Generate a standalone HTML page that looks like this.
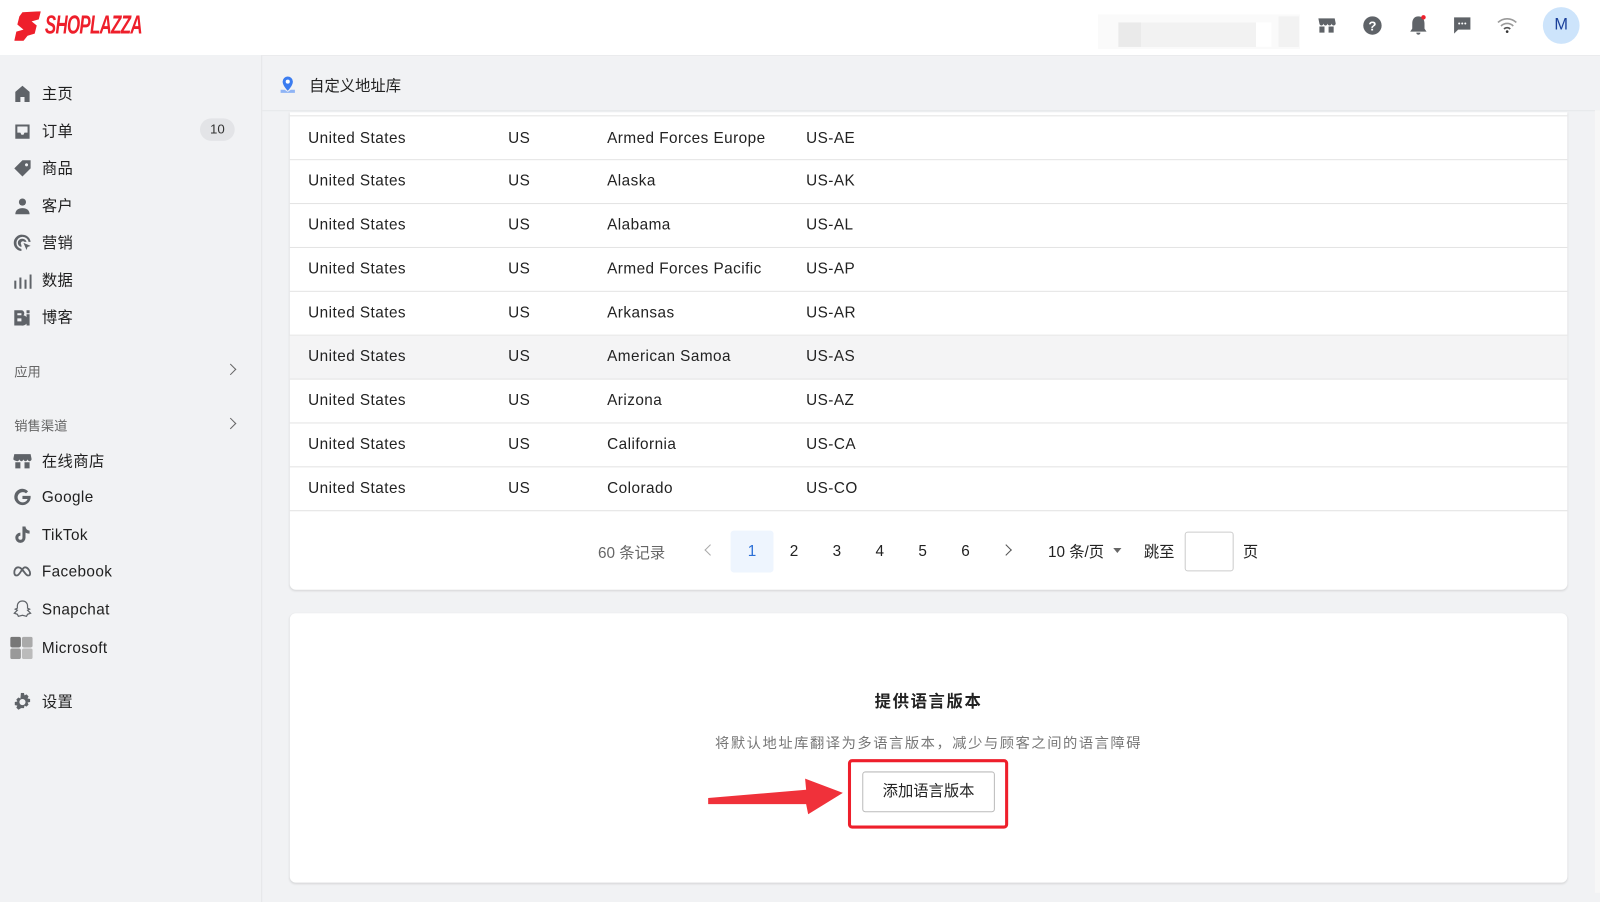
<!DOCTYPE html>
<html><head><meta charset="utf-8"><style>
*{box-sizing:border-box;margin:0;padding:0}
body{width:1600px;height:893px;overflow:hidden;background:#f1f2f4;font-family:"Liberation Sans","Noto Sans CJK SC",sans-serif;color:#222;position:relative}
#w{position:absolute;left:0;top:0;width:1568px;height:875px;transform:scale(1.020408);transform-origin:0 0}
.hdr{position:absolute;left:0;top:0;width:1568px;height:55px;background:#fff;border-bottom:1px solid #e8e9eb}
.side{position:absolute;left:0;top:54px;width:257px;height:830px;border-right:1px solid #e4e5e8;background:#f1f2f4}
.nav{position:absolute;left:13px;display:flex;align-items:center;font-size:15px;color:#1f1f1f;letter-spacing:.4px}
.nav svg{width:18px;height:18px;margin-right:10px;fill:#5f6368}
.sec{position:absolute;left:14px;font-size:13px;color:#666}
.chev{position:absolute;left:222px;width:8px;height:8px;border-right:1.5px solid #666;border-top:1.5px solid #666;transform:rotate(45deg)}
.card{position:absolute;left:284px;width:1252px;background:#fff;border-radius:6px;box-shadow:0 1px 2px rgba(0,0,0,.12)}
.row{position:absolute;left:0;width:1252px;height:43px;border-bottom:1px solid #e3e3e3;font-size:15px;color:#222;letter-spacing:.45px}
.row span{position:absolute;top:12px}
.pg{position:absolute;top:532px;font-size:15px;color:#222}
</style></head><body>
<div id="w">
<div class="hdr">
 <svg style="position:absolute;left:14px;top:11px" width="26" height="29" viewBox="0 0 26 29"><path d="M8 1 L26 0 L24 8 L17 10 L22 14 L20 22 L13 24 L9 29 L0 29 L2 20 L9 18 L3 13 L5 5 Z" fill="#ee1f2b"/></svg>
 <div style="position:absolute;left:44px;top:11px;font:italic bold 24px 'Liberation Sans',sans-serif;color:#ee1f2b;letter-spacing:-1px;transform:scale(0.69,1.05);transform-origin:0 0">SHOPLAZZA</div>
 <div style="position:absolute;left:1076px;top:14px;width:198px;height:34px;background:#fafafa"></div>
 <div style="position:absolute;left:1096px;top:22px;width:150px;height:24px;background:linear-gradient(90deg,#eaeaea 0 22px,#f2f2f2 22px 135px,#fff 135px)"></div>
 <div style="position:absolute;left:1253px;top:16px;width:20px;height:30px;background:#f2f2f2"></div>
 <svg style="position:absolute;left:1290px;top:15px" width="20" height="20" viewBox="0 0 20 20" fill="#5f6368"><path d="M2 3h16l1 5c0 1-1 2-2 2s-2-1-2-2c0 1-1 2-2 2s-2-1-2-2c0 1-1 2-2 2s-2-1-2-2c0 1-1 2-2 2s-2-1-2-2z"/><path d="M3 11h5v6H3zM12 11h5v6h-5z"/></svg>
 <svg style="position:absolute;left:1335px;top:15px" width="20" height="20" viewBox="0 0 20 20"><circle cx="10" cy="10" r="9" fill="#5f6368"/><text x="10" y="15" font-size="13" font-weight="bold" text-anchor="middle" fill="#fff" font-family="Liberation Sans">?</text></svg>
 <svg style="position:absolute;left:1380px;top:14px" width="20" height="22" viewBox="0 0 20 22" fill="#5f6368"><path d="M10 2c-4 0-6 3-6 7v5l-2 3h16l-2-3V9c0-4-2-7-6-7zM8 18h4a2 2 0 0 1-4 0z"/><circle cx="15" cy="3" r="2.2" fill="#ee1f2b"/></svg>
 <svg style="position:absolute;left:1424px;top:16px" width="18" height="18" viewBox="0 0 18 18"><path d="M1 1h16v12H5l-4 4z" fill="#5f6368"/><circle cx="6" cy="7" r="1" fill="#fff"/><circle cx="9" cy="7" r="1" fill="#fff"/><circle cx="12" cy="7" r="1" fill="#fff"/></svg>
 <svg style="position:absolute;left:1467px;top:17px" width="20" height="16" viewBox="0 0 20 16" fill="none" stroke="#9a9a9a" stroke-width="1.6"><path d="M1 5a13 13 0 0 1 18 0M4 8.5a8.5 8.5 0 0 1 12 0"/><path d="M7 11.5a4 4 0 0 1 6 0" stroke="#555"/><circle cx="10" cy="14" r="1.3" fill="#333" stroke="none"/></svg>
 <div style="position:absolute;left:1512px;top:7px;width:36px;height:36px;border-radius:50%;background:#cde4fb;color:#1a3f9a;font-size:16px;text-align:center;line-height:36px">M</div>
</div>
<div class="side">
 <div class="nav" style="top:27px"><svg viewBox="0 0 18 18"><path d="M9 1L2 7v10h5v-5h4v5h5V7z"/></svg>主页</div>
 <div class="nav" style="top:64px"><svg viewBox="0 0 18 18"><path d="M2 2h14v14H2zM4 4v6h3l1 2h2l1-2h3V4z"/></svg>订单</div>
 <div style="position:absolute;left:196px;top:62px;width:34px;height:22px;border-radius:11px;background:#e3e4e7;font-size:13px;text-align:center;line-height:22px;color:#333">10</div>
 <div class="nav" style="top:100px"><svg viewBox="0 0 18 18"><path d="M9 1h8v8l-8 8-8-8zM13 4a1.5 1.5 0 1 0 .01 0z"/></svg>商品</div>
 <div class="nav" style="top:137px"><svg viewBox="0 0 18 18"><circle cx="9" cy="5" r="3.5"/><path d="M2 17c0-4 3-6 7-6s7 2 7 6z"/></svg>客户</div>
 <div class="nav" style="top:173px"><svg viewBox="0 0 18 18"><path d="M9 1a8 8 0 0 0-1 16v-2a6 6 0 1 1 7-7h2A8 8 0 0 0 9 1zm0 4a4 4 0 0 0-1 8v-2a2 2 0 1 1 3-3h2a4 4 0 0 0-4-3zm1 4l7 3-3 1-1 3z"/></svg>营销</div>
 <div class="nav" style="top:210px"><svg viewBox="0 0 18 18"><path d="M1 9h2v8H1zM6 6h2v11H6zM11 8h2v9h-2zM16 3h2v14h-2z"/></svg>数据</div>
 <div class="nav" style="top:246px"><svg viewBox="0 0 18 18"><path d="M1 2h7a3 3 0 0 1 2 5 3 3 0 0 1-2 10H1zM4 5v2h4V5zM4 10v3h4v-3zM13 6h3v11h-3zM13 2h3v3h-3z"/></svg>博客</div>
 <div class="sec" style="top:300px">应用</div><div class="chev" style="top:304px"></div>
 <div class="sec" style="top:353px">销售渠道</div><div class="chev" style="top:357px"></div>
 <div class="nav" style="top:387px"><svg viewBox="0 0 18 18"><path d="M1 2h16l1 5c0 1-1 2-2 2s-2-1-2-2c0 1-1 2-2 2s-2-1-2-2c0 1-1 2-2 2s-2-1-2-2c0 1-1 2-2 2S0 8 0 7z"/><path d="M2 10h5v6H2zM11 10h5v6h-5z"/></svg>在线商店</div>
 <div class="nav" style="top:424px"><svg viewBox="0 0 18 18"><path d="M9 1a8 8 0 1 0 8 8.5V8H9v3h5a5 5 0 1 1-1.5-5.5l2-2A8 8 0 0 0 9 1z"/></svg>Google</div>
 <div class="nav" style="top:461px"><svg viewBox="0 0 18 18"><path d="M9 1h3a4 4 0 0 0 4 4v3a7 7 0 0 1-4-1v5a5 5 0 1 1-5-5v3a2 2 0 1 0 2 2z"/></svg>TikTok</div>
 <div class="nav" style="top:497px"><svg viewBox="0 0 18 18" fill="none" stroke="#5f6368" stroke-width="1.8" style="fill:none"><path d="M5 5c-3 0-4 3-4 5s1 3 2.5 3c3 0 5-8 8-8 3 0 5 4 5 6s-1 2-2 2c-3 0-5-8-9.5-8z"/></svg>Facebook</div>
 <div class="nav" style="top:534px"><svg viewBox="0 0 18 18" style="fill:none" stroke="#5f6368" stroke-width="1.2"><path d="M9 1c3 0 5 2 5 5v2l2 1-2 1 3 3-3 1-1 2-4-1-4 1-1-2-3-1 3-3-2-1 2-1V6c0-3 2-5 5-5z"/></svg>Snapchat</div>
 <div class="nav" style="top:570px;left:10px"><svg viewBox="0 0 22 22" style="width:22px;height:22px;margin-right:9px"><rect x="0" y="0" width="10.5" height="10.5" rx="2" fill="#777"/><rect x="11.5" y="0" width="10.5" height="10.5" rx="2" fill="#aaa"/><rect x="0" y="11.5" width="10.5" height="10.5" rx="2" fill="#999"/><rect x="11.5" y="11.5" width="10.5" height="10.5" rx="2" fill="#bbb"/></svg>Microsoft</div>
 <div class="nav" style="top:623px"><svg viewBox="0 0 18 18"><path d="M7.5 0h3l.5 2.5 2-1 2 2-1 2 2.5.5v3l-2.5.5 1 2-2 2-2-1-.5 2.5h-3L7 15.5l-2 1-2-2 1-2L1.5 12V9L4 8.5 3 6.5l2-2 2 1zM9 6a3 3 0 1 0 .01 0z"/></svg>设置</div>
</div>
<svg style="position:absolute;left:273px;top:74px" width="18" height="18" viewBox="0 0 18 18"><path d="M9 1a5 5 0 0 0-5 5c0 4 5 9 5 9s5-5 5-9a5 5 0 0 0-5-5z" fill="#3b7cf0"/><circle cx="9" cy="6" r="2" fill="#fff"/><path d="M2 14h4l3 2 3-2h4v3H2z" fill="#8fb4f5"/></svg>
<div style="position:absolute;left:303px;top:73px;font-size:15px;color:#222">自定义地址库</div>
<div style="position:absolute;left:257px;top:108px;width:1311px;height:1px;background:#e6e7e9"></div>
<div class="card" style="top:110px;height:468px;border-radius:0 0 6px 6px">
 <div class="row" style="top:3px;border-top:1px solid #e3e3e3;height:44px"><span style="left:18px;top:13px">United States</span><span style="left:214px;top:13px">US</span><span style="left:311px;top:13px">Armed Forces Europe</span><span style="left:506px;top:13px">US-AE</span></div>
 <div class="row" style="top:47px"><span style="left:18px">United States</span><span style="left:214px">US</span><span style="left:311px">Alaska</span><span style="left:506px">US-AK</span></div>
 <div class="row" style="top:90px"><span style="left:18px">United States</span><span style="left:214px">US</span><span style="left:311px">Alabama</span><span style="left:506px">US-AL</span></div>
 <div class="row" style="top:133px"><span style="left:18px">United States</span><span style="left:214px">US</span><span style="left:311px">Armed Forces Pacific</span><span style="left:506px">US-AP</span></div>
 <div class="row" style="top:176px"><span style="left:18px">United States</span><span style="left:214px">US</span><span style="left:311px">Arkansas</span><span style="left:506px">US-AR</span></div>
 <div class="row" style="top:219px;background:#f4f4f5"><span style="left:18px">United States</span><span style="left:214px">US</span><span style="left:311px">American Samoa</span><span style="left:506px">US-AS</span></div>
 <div class="row" style="top:262px"><span style="left:18px">United States</span><span style="left:214px">US</span><span style="left:311px">Arizona</span><span style="left:506px">US-AZ</span></div>
 <div class="row" style="top:305px"><span style="left:18px">United States</span><span style="left:214px">US</span><span style="left:311px">California</span><span style="left:506px">US-CA</span></div>
 <div class="row" style="top:348px"><span style="left:18px">United States</span><span style="left:214px">US</span><span style="left:311px">Colorado</span><span style="left:506px">US-CO</span></div>
</div>
<div class="pg" style="left:586px;color:#666;top:531px">60 条记录</div>
<div style="position:absolute;left:692px;top:535px;width:8px;height:8px;border-left:1.4px solid #aaa;border-bottom:1.4px solid #aaa;transform:rotate(45deg)"></div>
<div style="position:absolute;left:716px;top:520px;width:42px;height:41px;background:#eef5fe;border-radius:3px;color:#2a6fd6;font-size:15px;text-align:center;line-height:41px">1</div>
<div class="pg" style="left:774px">2</div><div class="pg" style="left:816px">3</div><div class="pg" style="left:858px">4</div><div class="pg" style="left:900px">5</div><div class="pg" style="left:942px">6</div>
<div style="position:absolute;left:982px;top:535px;width:8px;height:8px;border-right:1.6px solid #555;border-top:1.6px solid #555;transform:rotate(45deg)"></div>
<div class="pg" style="left:1027px;top:530px">10 条/页</div>
<div style="position:absolute;left:1091px;top:537px;border:4.5px solid transparent;border-top:5px solid #666"></div>
<div class="pg" style="left:1121px;top:530px">跳至</div>
<div style="position:absolute;left:1161px;top:521px;width:48px;height:39px;border:1px solid #ccc;border-radius:3px;background:#fff"></div>
<div class="pg" style="left:1218px;top:530px">页</div>
<div class="card" style="top:601px;height:264px">
 <div style="position:absolute;left:0;width:1252px;top:73px;text-align:center;font-size:16px;font-weight:bold;color:#222;letter-spacing:1.6px">提供语言版本</div>
 <div style="position:absolute;left:0;width:1252px;top:117px;text-align:center;font-size:14px;color:#777;letter-spacing:1.5px">将默认地址库翻译为多语言版本，减少与顾客之间的语言障碍</div>
</div>
<div style="position:absolute;left:831px;top:744px;width:157px;height:68px;border:3px solid #ee1f2b;border-radius:4px"></div>
<div style="position:absolute;left:845px;top:756px;width:130px;height:40px;border:1px solid #bbb;border-radius:3px;background:#fff;font-size:15px;text-align:center;line-height:38px;color:#222">添加语言版本</div>
<svg style="position:absolute;left:692px;top:760px" width="136" height="40" viewBox="0 0 136 40"><path d="M2 22 L98 14 L97 3 L134 17 L100 38 L98 28 L2 28 Z" fill="#f0313a"/></svg>
<div style="position:absolute;left:1563px;top:108px;width:5px;height:767px;background:#f7f7f7"></div>
</div>
</body></html>
